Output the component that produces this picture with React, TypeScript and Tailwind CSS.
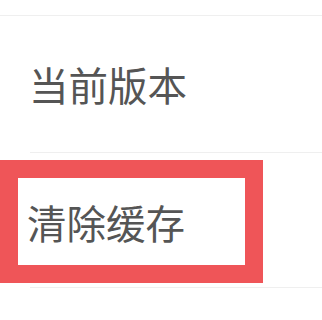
import React from "react";

export default function App() {
  const font = { fontFamily: '"Noto Sans CJK SC", "Noto Sans", sans-serif' };
  return (
    <div className="w-[322px] h-[320px] bg-white overflow-hidden pt-[15px]" style={font}>
      <div className="h-px bg-[#efefef]" />
      <div className="h-[136px] flex items-center pl-[29px]">
        <span className="text-[39.5px] leading-none text-[#555555]">当前版本</span>
      </div>
      <div className="h-px bg-[#efefef] ml-[30px]" />
      <div className="mt-[7px] w-[263px] h-[123px] border-[18px] border-[#ef5558] flex items-center pl-[9px]">
        <span className="text-[39.5px] leading-none text-[#555555]">清除缓存</span>
      </div>
      <div className="h-px bg-[#efefef] ml-[30px] mt-[4px]" />
    </div>
  );
}
